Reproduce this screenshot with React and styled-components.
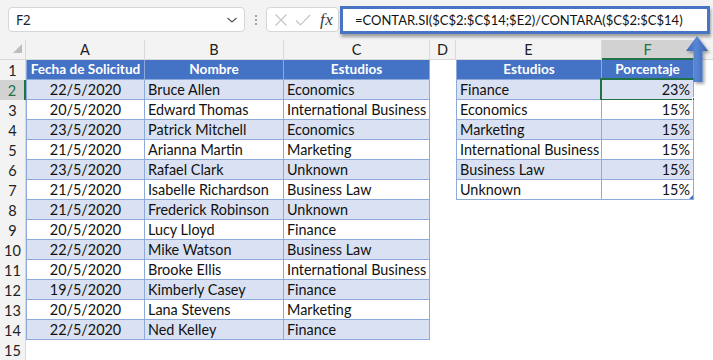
import React from 'react'
import styled, { createGlobalStyle } from 'styled-components'

const GlobalStyle = createGlobalStyle`
  html, body {
    margin: 0;
    padding: 0;
    background: #ffffff;
  }
  #root {
    width: 713px;
    height: 360px;
    overflow: hidden;
  }
`

const CELL_FONT = `"Lato", "Noto Sans", sans-serif`
const BLUE = '#4472c4'
const LINE = '#8eaadb'
const BAND = '#d9e1f2'
const GREEN = '#217346'

const leftRows = [
  ['22/5/2020', 'Bruce Allen', 'Economics'],
  ['20/5/2020', 'Edward Thomas', 'International Business'],
  ['23/5/2020', 'Patrick Mitchell', 'Economics'],
  ['21/5/2020', 'Arianna Martin', 'Marketing'],
  ['23/5/2020', 'Rafael Clark', 'Unknown'],
  ['21/5/2020', 'Isabelle Richardson', 'Business Law'],
  ['21/5/2020', 'Frederick Robinson', 'Unknown'],
  ['20/5/2020', 'Lucy Lloyd', 'Finance'],
  ['22/5/2020', 'Mike Watson', 'Business Law'],
  ['20/5/2020', 'Brooke Ellis', 'International Business'],
  ['19/5/2020', 'Kimberly Casey', 'Finance'],
  ['20/5/2020', 'Lana Stevens', 'Marketing'],
  ['22/5/2020', 'Ned Kelley', 'Finance'],
]

const rightRows = [
  ['Finance', '23%'],
  ['Economics', '15%'],
  ['Marketing', '15%'],
  ['International Business', '15%'],
  ['Business Law', '15%'],
  ['Unknown', '15%'],
]

const columns = ['A', 'B', 'C', 'D', 'E', 'F']

function App() {
  const rows = []
  for (let r = 1; r <= 15; r++) {
    const band = r % 2 === 0
    const left = r === 1 ? ['Fecha de Solicitud', 'Nombre', 'Estudios'] : leftRows[r - 2]
    const right = r === 1 ? ['Estudios', 'Porcentaje'] : rightRows[r - 2]
    const kind = r === 1 ? 'head' : band ? 'band' : 'plain'

    rows.push(<RowHead key={`h${r}`} $active={r === 2}>{r}</RowHead>)

    if (left) {
      rows.push(<Cell key={`a${r}`} $kind={kind} $align="center" $first>{left[0]}</Cell>)
      rows.push(<Cell key={`b${r}`} $kind={kind} $align={r === 1 ? 'center' : 'left'}>{left[1]}</Cell>)
      rows.push(<Cell key={`c${r}`} $kind={kind} $align={r === 1 ? 'center' : 'left'}>{left[2]}</Cell>)
    } else {
      rows.push(<Cell key={`a${r}`} />, <Cell key={`b${r}`} />, <Cell key={`c${r}`} />)
    }

    rows.push(<Cell key={`d${r}`} />)

    if (right) {
      rows.push(<Cell key={`e${r}`} $kind={kind} $align={r === 1 ? 'center' : 'left'} $first>{right[0]}</Cell>)
      rows.push(
        <Cell key={`f${r}`} $kind={kind} $align={r === 1 ? 'center' : 'right'}>
          {right[1]}
          {r === 2 && <Selection><FillHandle /></Selection>}
          {r === 7 && <ResizeHandle />}
        </Cell>
      )
    } else {
      rows.push(<Cell key={`e${r}`} />, <Cell key={`f${r}`} />)
    }

    rows.push(<Cell key={`g${r}`} />)
  }

  return (
    <Page>
      <GlobalStyle />
      <Toolbar>
        <NameBox>
          <span>F2</span>
          <svg width="12" height="8" viewBox="0 0 12 8">
            <path d="M1.5 2 L6 6 L10.5 2" fill="none" stroke="#555" strokeWidth="1.2" />
          </svg>
        </NameBox>
        <Grip>
          <i /><i /><i />
        </Grip>
        <FxBox>
          <svg width="14" height="14" viewBox="0 0 14 14">
            <path d="M1.5 1.5 L12.5 12.5 M12.5 1.5 L1.5 12.5" stroke="#c6c6c6" strokeWidth="1.2" />
          </svg>
          <svg width="16" height="14" viewBox="0 0 16 14">
            <path d="M1 7.5 L5.5 12 L15 2" fill="none" stroke="#c6c6c6" strokeWidth="1.2" />
          </svg>
          <Fx>fx</Fx>
        </FxBox>
        <FormulaBox>=CONTAR.SI($C$2:$C$14;$E2)/CONTARA($C$2:$C$14)</FormulaBox>
      </Toolbar>

      <Sheet>
        <Corner>
          <svg width="9" height="9" viewBox="0 0 9 9">
            <path d="M9 0 L9 9 L0 9 Z" fill="#bdbdbd" />
          </svg>
        </Corner>
        {columns.map((c) => (
          <ColHead key={c} $active={c === 'F'}>{c}</ColHead>
        ))}
        <ColHead $last />
        {rows}
      </Sheet>

      <Arrow width="30" height="52" viewBox="0 0 30 52">
        <defs>
          <linearGradient id="arrowFill" x1="0" y1="0" x2="1" y2="0">
            <stop offset="0" stopColor="#3d68b8" />
            <stop offset="0.45" stopColor="#5a86d6" />
            <stop offset="1" stopColor="#3a63ae" />
          </linearGradient>
          <filter id="arrowShadow" x="-40%" y="-20%" width="180%" height="150%">
            <feDropShadow dx="2" dy="2" stdDeviation="1.5" floodColor="#000" floodOpacity="0.35" />
          </filter>
        </defs>
        <path
          d="M12 1 L23 16 L17.5 16 L17.5 47 L8.5 47 L8.5 16 L1 16 Z"
          fill="url(#arrowFill)"
          filter="url(#arrowShadow)"
        />
      </Arrow>
    </Page>
  )
}

const Page = styled.div`
  position: relative;
  width: 713px;
  height: 360px;
  background: #ffffff;
  overflow: hidden;
`

const Toolbar = styled.div`
  height: 40px;
  box-sizing: border-box;
  background: #f3f3f3;
  display: flex;
  align-items: center;
  padding: 0 0 1px 8px;
`

const NameBox = styled.div`
  width: 237px;
  height: 25px;
  box-sizing: border-box;
  background: #ffffff;
  border: 1px solid #d6d6d6;
  border-radius: 4px;
  display: flex;
  align-items: center;
  justify-content: space-between;
  padding: 0 6px 0 7px;
  font-family: "Noto Sans", "Open Sans", sans-serif;
  font-size: 13.5px;
  color: #222;
`

const Grip = styled.div`
  width: 21px;
  display: flex;
  flex-direction: column;
  align-items: center;
  gap: 2px;
  i {
    display: block;
    width: 2px;
    height: 2px;
    border-radius: 1px;
    background: #8a8a8a;
  }
`

const FxBox = styled.div`
  width: 73px;
  height: 25px;
  box-sizing: border-box;
  background: #ffffff;
  border: 1px solid #d6d6d6;
  border-radius: 4px;
  display: flex;
  align-items: center;
  gap: 7px;
  padding: 0 0 0 7px;
`

const Fx = styled.span`
  font-family: "Liberation Serif", "DejaVu Serif", serif;
  font-style: italic;
  font-size: 17px;
  color: #3c3c3c;
  margin-left: 2px;
  letter-spacing: 0.5px;
`

const FormulaBox = styled.div`
  margin-left: 1px;
  width: 370px;
  height: 28px;
  box-sizing: border-box;
  background: #ffffff;
  border: 3px solid #4874c6;
  box-shadow: 1px 3px 3px rgba(0, 0, 0, 0.35);
  display: flex;
  align-items: center;
  padding-left: 12px;
  font-family: ${CELL_FONT};
  font-size: 13px;
  color: #111;
  white-space: nowrap;
`

const Sheet = styled.div`
  display: grid;
  grid-template-columns: 26px 119px 139px 146px 26px 146px 92px 1fr;
  grid-auto-rows: 20px;
  font-family: ${CELL_FONT};
  font-size: 14.4px;
`

const Corner = styled.div`
  background: #f3f3f3;
  border-right: 1px solid #d9d9d9;
  border-bottom: 1px solid #d9d9d9;
  box-sizing: border-box;
  display: flex;
  align-items: flex-end;
  justify-content: flex-end;
  padding: 0 3px 6px 0;
`

const ColHead = styled.div`
  box-sizing: border-box;
  background: ${(p) => (p.$active ? '#d2d2d2' : '#f3f3f3')};
  color: ${(p) => (p.$active ? GREEN : '#222')};
  border-right: ${(p) => (p.$last ? 'none' : '1px solid #d9d9d9')};
  border-bottom: ${(p) => (p.$active ? `2px solid ${GREEN}` : '1px solid #d9d9d9')};
  display: flex;
  align-items: center;
  justify-content: center;
  font-size: 14.5px;
`

const RowHead = styled.div`
  box-sizing: border-box;
  background: ${(p) => (p.$active ? '#d2d2d2' : '#f3f3f3')};
  color: ${(p) => (p.$active ? GREEN : '#222')};
  border-right: ${(p) => (p.$active ? `2px solid ${GREEN}` : '1px solid #d9d9d9')};
  display: flex;
  align-items: center;
  justify-content: center;
  font-size: 14.5px;
`

const Cell = styled.div`
  position: relative;
  box-sizing: border-box;
  white-space: nowrap;
  overflow: visible;
  line-height: 19px;
  padding: 0 3px;
  text-align: ${(p) => p.$align || 'left'};
  background: ${(p) => (p.$kind === 'head' ? BLUE : p.$kind === 'band' ? BAND : '#ffffff')};
  color: ${(p) => (p.$kind === 'head' ? '#ffffff' : '#111')};
  font-weight: ${(p) => (p.$kind === 'head' ? 700 : 400)};
  font-size: ${(p) => (p.$kind === 'head' ? '13.6px' : 'inherit')};
  border-right: ${(p) => (p.$kind ? `1px solid ${LINE}` : 'none')};
  border-bottom: ${(p) => (p.$kind ? `1px solid ${LINE}` : 'none')};
  border-left: ${(p) => (p.$kind && p.$first ? `1px solid ${LINE}` : 'none')};
`

const Selection = styled.div`
  position: absolute;
  left: -2px;
  top: -2px;
  right: -3px;
  bottom: -2px;
  border: 2px solid ${GREEN};
  pointer-events: none;
`

const FillHandle = styled.div`
  position: absolute;
  right: -4px;
  bottom: -4px;
  width: 6px;
  height: 6px;
  background: ${GREEN};
  border: 1px solid #ffffff;
  box-sizing: border-box;
`

const ResizeHandle = styled.div`
  position: absolute;
  right: 0;
  bottom: 0;
  width: 0;
  height: 0;
  border-left: 4px solid transparent;
  border-bottom: 4px solid #4472c4;
`

const Arrow = styled.svg`
  position: absolute;
  left: 685px;
  top: 35px;
  overflow: visible;
`

export default App
